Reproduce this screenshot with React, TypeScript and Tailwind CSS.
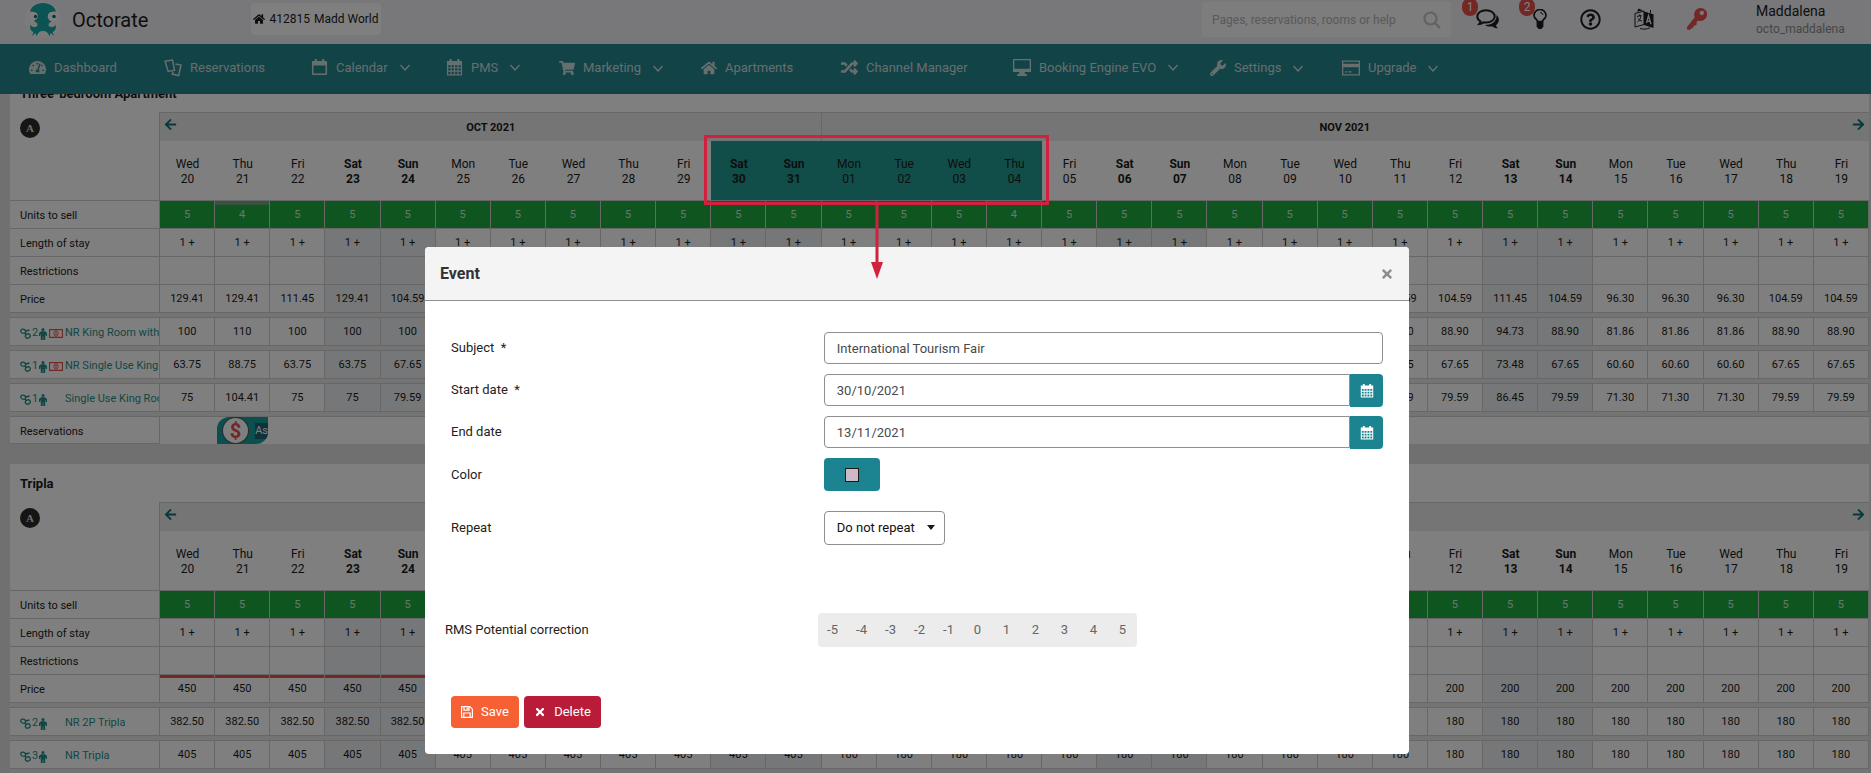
import type { ReactNode } from "react";
import {
  FaArrowLeft,
  FaArrowRight,
  FaHome,
  FaKey,
  FaRandom,
  FaRegQuestionCircle,
  FaShoppingCart,
  FaTachometerAlt,
  FaTimes,
  FaWrench,
} from "react-icons/fa";

type NavItem = {
  label: string;
  icon: ReactNode;
  width: string;
  menu?: boolean;
};

type Rate = {
  name: string;
  guests: number;
  refund?: boolean;
  values: string[];
};

type Room = {
  title: string;
  units: number[];
  prices: string[];
  priceAlert?: number;
  marked?: boolean;
  booking?: string;
  rates: Rate[];
};

const WEEK = ["Sun", "Mon", "Tue", "Wed", "Thu", "Fri", "Sat"];

// 20 Oct 2021 (Wed) -> 19 Nov 2021
const days = Array.from({ length: 31 }, (_, i) => {
  const num = i < 12 ? 20 + i : i - 11;
  const name = WEEK[(3 + i) % 7];
  return {
    name,
    num: String(num).padStart(2, "0"),
    weekend: name === "Sat" || name === "Sun",
  };
});

const fill = (n: number, v: string): string[] => Array(n).fill(v);

const rooms: Room[] = [
  {
    title: "Three-bedroom Apartment",
    units: days.map((_, i) => (i === 1 || i === 15 ? 4 : 5)),
    prices: [
      "129.41", "129.41", "111.45", "129.41", ...fill(20, "104.59"),
      "111.45", "104.59", ...fill(3, "96.30"), ...fill(2, "104.59"),
    ],
    marked: true,
    booking: "As",
    rates: [
      {
        name: "NR King Room with Balcony",
        guests: 2,
        refund: true,
        values: [
          "100", "110", "100", "100", "100", ...fill(19, "88.90"),
          "94.73", "88.90", ...fill(3, "81.86"), ...fill(2, "88.90"),
        ],
      },
      {
        name: "NR Single Use King Room",
        guests: 1,
        refund: true,
        values: [
          "63.75", "88.75", "63.75", "63.75", ...fill(20, "67.65"),
          "73.48", "67.65", ...fill(3, "60.60"), ...fill(2, "67.65"),
        ],
      },
      {
        name: "Single Use King Room",
        guests: 1,
        values: [
          "75", "104.41", "75", "75", ...fill(20, "79.59"),
          "86.45", "79.59", ...fill(3, "71.30"), ...fill(2, "79.59"),
        ],
      },
    ],
  },
  {
    title: "Tripla",
    units: days.map(() => 5),
    prices: [...fill(12, "450"), ...fill(19, "200")],
    priceAlert: 12,
    rates: [
      { name: "NR 2P Tripla", guests: 2, values: [...fill(12, "382.50"), ...fill(19, "180")] },
      { name: "NR Tripla", guests: 3, values: [...fill(12, "405"), ...fill(19, "180")] },
    ],
  },
];

function CardsIcon() {
  return (
    <svg viewBox="0 0 18 18" className="size-[18px]" fill="none" stroke="currentColor" strokeWidth="1.5">
      <path d="M1 2.200 8.500 1l2 10.200-6.300 1.300z" />
      <path d="M11.500 5 17 6 14.600 16.500l-6.200-1.400.5-2.500" />
    </svg>
  );
}

function CalendarIcon() {
  return (
    <svg viewBox="0 0 18 18" className="size-[17px]" fill="currentColor">
      <path d="M4 0h2.200v2h5.600V0H14v2h2a1 1 0 0 1 1 1v13a1 1 0 0 1-1 1H2a1 1 0 0 1-1-1V3a1 1 0 0 1 1-1h2zM2.600 7v8.400h12.800V7z" fillRule="evenodd" />
    </svg>
  );
}

function GridCalendarIcon({ className }: { className: string }) {
  return (
    <svg viewBox="0 0 18 18" className={className} fill="currentColor">
      <path
        fillRule="evenodd"
        d="M3.6 1.2a1.3 1.3 0 0 1 2.6 0V2h5.6v-.8a1.3 1.3 0 0 1 2.6 0V2H17v15.5H1V2h2.6zM2.3 6.5v2.3h2.5V6.5zm3.6 0v2.3h2.5V6.5zm3.7 0v2.3h2.5V6.5zm3.7 0v2.3h2.4V6.5zM2.3 9.9v2.4h2.5V9.9zm3.6 0v2.4h2.5V9.9zm3.7 0v2.4h2.5V9.9zm3.7 0v2.4h2.4V9.9zM2.3 13.5v2.6h2.5v-2.6zm3.6 0v2.6h2.5v-2.6zm3.7 0v2.6h2.5v-2.6zm3.7 0v2.6h2.4v-2.6z"
      />
    </svg>
  );
}

function DesktopIcon() {
  return (
    <svg viewBox="0 0 18 17" className="h-[17px] w-[18px]" fill="currentColor">
      <path d="M0 0h18v13h-6.5l.8 2.3H14V17H4v-1.7h1.7l.8-2.3H0zm1.3 1.3v8.4h15.4V1.3z" fillRule="evenodd" />
    </svg>
  );
}

function CreditCardIcon() {
  return (
    <svg viewBox="0 0 18 16" className="h-4 w-[18px]" fill="currentColor">
      <path d="M0 .5h18v15H0zm1.3 1.3v2h15.4v-2zm0 5.4v7h15.4v-7zM3 11.2h2.2v1.3H3zm3.3 0h3.2v1.3H6.3z" fillRule="evenodd" />
    </svg>
  );
}

function Chevron() {
  return (
    <svg viewBox="0 0 10 7" className="h-[7px] w-[10px]" fill="none" stroke="currentColor" strokeWidth="1.4">
      <path d="m.5 1 4.5 5 4.5-5" />
    </svg>
  );
}

function Octopus() {
  return (
    <svg viewBox="0 0 36 36" className="size-9">
      <circle cx="18" cy="18" r="18" fill="#fff" fillOpacity=".45" />
      {/* head, then the curled legs around the gap in the middle */}
      <path
        d="M18 1c7 0 12 3.500 13 9-2-1-5 0-6 2.500s0 5.500 2 6.500c-2 1.500-3.500 2-3.500 4 0 1.500 1.500 2 3.500 2 2.500 0 3-1 3.500-2.500 1 3.500 0 6.500-3 7.500l1.500 4-3.500-3-1 3.500c-1-3.500-3-5.500-6.500-5.500S12.500 31 11.500 34.500l-1-3.500L7 34l1.500-4c-3-1-4-4-3-7.500C6 24 6.500 25 9 25c2 0 3.500-.5 3.500-2 0-2-1.500-2.500-3.500-4 2-1 3-4 2-6.500S7 9 5 10C6 4.500 11 1 18 1z"
        fill="#17a8a6"
      />
      <circle cx="9" cy="14" r="3.800" fill="#fff" />
      <circle cx="27.500" cy="14.500" r="4.800" fill="#fff" />
      <circle cx="10.500" cy="14.500" r="1.700" fill="#17686b" />
      <circle cx="29" cy="14.500" r="1.800" fill="#17686b" />
    </svg>
  );
}

function ChatIcon() {
  return (
    <svg viewBox="0 0 24 20" className="h-5 w-6">
      <path d="M20.500 6c3 2.800 3.500 7-.5 10.200.3 1.300 1 2.200 2.200 3-2.600.2-4.300-.5-5.600-1.800-3 .5-5.700 0-7.600-1.400 6 0 12-3 11.500-10z" fill="currentColor" />
      <path
        d="M10 1.200c5 0 8.700 2.700 8.700 6.200s-3.700 6.200-8.700 6.200c-.8 0-1.700-.1-2.500-.3-1 .9-2.400 1.600-4.200 1.700.7-.8 1.100-1.600 1.200-2.700C2.500 11.100 1.300 9.400 1.300 7.400c0-3.500 3.700-6.200 8.700-6.200z"
        fill="none"
        stroke="currentColor"
        strokeWidth="2"
      />
    </svg>
  );
}

function BulbIcon() {
  return (
    <svg viewBox="0 0 14 20" className="h-5 w-[14px]" fill="none" stroke="currentColor" strokeWidth="1.700">
      <path d="M4.500 12.500c0-2-3.500-3-3.500-6A6 6 0 0 1 13 6.500c0 3-3.500 4-3.500 6z" />
      <path d="M7 3.600c1.700 0 2.800 1 2.900 2.400" strokeWidth="1" />
      <path d="M3.600 12.500h6.800v5L8.500 20h-3l-1.900-2.500z" fill="currentColor" stroke="none" />
    </svg>
  );
}

function TranslateIcon() {
  return (
    <svg viewBox="0 0 20 22" className="h-[22px] w-5">
      <path d="M1 5.500 10 3v13.500L1 19zM6 20.500c3 1 7 .8 10-.8" fill="none" stroke="currentColor" />
      <path d="M3 3.500 4.500.500 9 2.500zM10 3.500l9.500 2.700V20L10 17zM16 2h1v3l-1-.3z" fill="currentColor" />
      <path d="M3 8.500 7.500 7.300M5.300 6.500v1.300M3.500 14c2-1.500 3-3.500 3.300-6M4 10.500c1 1.500 2.300 2.300 4 2.500" fill="none" stroke="currentColor" />
      <path d="m12.500 15 2-7.300 2.500 8.600m-3.900-3.500 3 .9" fill="none" stroke="#f0f1f3" strokeWidth="1.300" />
    </svg>
  );
}

function KeyIcon() {
  return (
    <svg viewBox="0 0 20 22" className="h-[22px] w-5" fill="currentColor">
      <path
        fillRule="evenodd"
        d="M13.500 0a6.500 6.500 0 1 1-2.600 12.400l-1.500 2 .6 1.600-1.500 1.500-1.200-.2-.8 1.700-1.500 1.300L2.500 22 0 21.500 0 19 7.800 9.300A6.500 6.500 0 0 1 13.500 0zm1.300 2.800a2.200 2.200 0 1 0 .1 4.400 2.200 2.200 0 0 0-.1-4.400z"
      />
    </svg>
  );
}

function ChainIcon() {
  return (
    <svg viewBox="0 0 11 11" className="size-[11px]" fill="none" stroke="currentColor" strokeWidth="1.300">
      <ellipse cx="3.200" cy="3.200" rx="2.500" ry="2" transform="rotate(25 3.200 3.200)" />
      <ellipse cx="7.800" cy="8" rx="2.500" ry="2.100" transform="rotate(-25 7.800 8)" />
      <path d="M5.300 4.300 5.800 6.500M9.500 2 5.500 3" />
    </svg>
  );
}

function PersonIcon() {
  return (
    <svg viewBox="0 0 8 12" className="h-3 w-2" fill="currentColor">
      <circle cx="4" cy="1.500" r="1.500" />
      <path d="M2 3.300h4L8 5v3H6.700V6.200h-.5V12H4.300V8.500h-.6V12H1.800V6.200h-.5V8H0V5z" />
    </svg>
  );
}

function MoneyIcon() {
  return (
    <svg viewBox="0 0 14 9" className="h-[9px] w-[14px]" fill="none" stroke="currentColor">
      <path d="M.5.500h13v8H.5z" strokeWidth="1.300" />
      <ellipse cx="7" cy="4.500" rx="2.200" ry="2.700" />
      <path d="M7 3v3" />
    </svg>
  );
}

function SaveIcon() {
  return (
    <svg viewBox="0 0 12 12" className="size-3" fill="none" stroke="currentColor" strokeWidth="1.200">
      <path d="M.6.600h8.200l2.600 2.600v8.200H.6zM3 .6v3.600h5V.6M2.800 11.400V7h6.400v4.400M6.300 1.500v1.800" />
    </svg>
  );
}

const nav: NavItem[] = [
  { label: "Dashboard", icon: <FaTachometerAlt className="size-[17px]" />, width: "w-[135px]" },
  { label: "Reservations", icon: <CardsIcon />, width: "w-[147px]" },
  { label: "Calendar", icon: <CalendarIcon />, width: "w-[135px]", menu: true },
  { label: "PMS", icon: <GridCalendarIcon className="size-[17px]" />, width: "w-[113px]", menu: true },
  { label: "Marketing", icon: <FaShoppingCart className="size-4" />, width: "w-[142px]", menu: true },
  { label: "Apartments", icon: <FaHome className="size-4" />, width: "w-[140px]" },
  { label: "Channel Manager", icon: <FaRandom className="size-[17px]" />, width: "w-[172px]" },
  { label: "Booking Engine EVO", icon: <DesktopIcon />, width: "w-[197px]", menu: true },
  { label: "Settings", icon: <FaWrench className="size-4" />, width: "w-[132px]", menu: true },
  { label: "Upgrade", icon: <CreditCardIcon />, width: "w-[132px]", menu: true },
];

function Badge({ children }: { children: ReactNode }) {
  return (
    <span className="absolute -top-[11px] -left-[14px] flex h-[18px] w-4 items-center justify-center rounded-full bg-[#e8504c] text-xs text-white">
      {children}
    </span>
  );
}

function TopBar() {
  return (
    <div className="flex h-11 items-start bg-[#f0f1f4] text-[#1c1c1c]">
      <div className="flex w-[251px] items-center gap-[11px] pt-[2px] pl-[25px]">
        <Octopus />
        <span className="text-xl leading-9">Octorate</span>
      </div>
      <button className="mt-[3px] flex h-8 w-[130px] items-center justify-center gap-1 rounded bg-white text-xs whitespace-nowrap">
        <FaHome className="size-3" />
        <span>412815</span>
        <span>Madd World</span>
      </button>
      <div className="mt-[2px] ml-auto flex h-[35px] w-[249px] items-center bg-[#fafafb] px-[10px]">
        <input
          aria-label="Search"
          placeholder="Pages, reservations, rooms or help"
          className="min-w-0 flex-1 bg-transparent text-xs placeholder:text-[#b4b4b4]"
        />
        <svg viewBox="0 0 18 18" className="size-[18px] text-[#c4c4c4]" fill="none" stroke="currentColor" strokeWidth="2.200">
          <circle cx="7.500" cy="7.500" r="6" />
          <path d="m12 12 5 5" />
        </svg>
      </div>
      <div className="flex w-[305px] items-center gap-[33px] pt-2 pl-[25px]">
        <button aria-label="Messages" className="relative"><ChatIcon /><Badge>1</Badge></button>
        <button aria-label="News" className="relative"><BulbIcon /><Badge>2</Badge></button>
        <button aria-label="Help"><FaRegQuestionCircle className="size-[21px]" /></button>
        <button aria-label="Language"><TranslateIcon /></button>
        <button aria-label="Access" className="text-[#e8504c]"><KeyIcon /></button>
      </div>
      <div className="w-[115px] pt-[2px]">
        <p className="text-sm leading-[18px]">Maddalena</p>
        <p className="text-xs leading-[18px] text-[#8a8a8a]">octo_maddalena</p>
      </div>
    </div>
  );
}

function NavBar() {
  return (
    <nav className="flex h-[50px] items-center bg-[#24868f] pt-[2px] pl-[29px] text-[13px] text-[#cfdcdc]">
      {nav.map((item) => (
        <div key={item.label} className={`${item.width} shrink-0`}>
          <a href="#" className="inline-flex items-center gap-2 whitespace-nowrap">
            {item.icon}
            <span>{item.label}</span>
            {item.menu && <span className="ml-1"><Chevron /></span>}
          </a>
        </div>
      ))}
    </nav>
  );
}

const line = "border-b border-[#cfcfcf]";
const cell = "h-7 border-r border-b border-[#cfcfcf] p-0 pt-[2px]";
const labelCell = "border-r border-b border-[#cfcfcf] bg-white p-0 pt-1 pl-[10px] text-left font-normal";

function dayBg(i: number) {
  return days[i].weekend ? "bg-[#eceef0]" : "bg-white";
}

function Spacer() {
  return (
    <tr>
      <td colSpan={32} className={`${line} h-[5px] bg-[#e8e9e9] p-0`} />
    </tr>
  );
}

function RoomCard({ room }: { room: Room }) {
  return (
    <section className="mb-5 bg-white">
      <h2 className="h-[38px] pt-[10px] pl-[10px] text-[13px] leading-[20px] font-bold">{room.title}</h2>
      <table className="w-full table-fixed border-separate border-spacing-0 text-center text-[11px]">
        <colgroup>
          <col className="w-[150px]" />
          {days.map((d) => <col key={d.num} />)}
        </colgroup>
        <thead>
          <tr>
            <td rowSpan={2} className="border-r border-b border-[#cfcfcf] p-0 pt-[6px] pl-[10px] text-left align-top">
              <span className="inline-flex size-5 items-center justify-center rounded-full bg-[#2a2a2a] font-['Liberation_Serif',serif] font-bold text-[#ddd]">
                A
              </span>
            </td>
            <th colSpan={12} className="h-[29px] border-t border-r border-[#cfcfcf] bg-[#ebebeb] p-0">
              <div className="flex items-start px-1">
                <button aria-label="Previous days" className="text-[#0b7377]"><FaArrowLeft className="size-[13px]" /></button>
                <span className="flex-1 pt-[2px] pr-3">OCT 2021</span>
              </div>
            </th>
            <th colSpan={19} className="border-t border-[#cfcfcf] bg-[#ebebeb] p-0">
              <div className="flex items-start px-1">
                <span className="flex-1 pt-[2px] pl-3">NOV 2021</span>
                <button aria-label="Next days" className="text-[#0b7377]"><FaArrowRight className="size-[13px]" /></button>
              </div>
            </th>
          </tr>
          <tr>
            {days.map((d, i) => (
              <th
                key={i}
                className={`h-[60px] border-b border-[#cfcfcf] p-0 pt-[2px] text-xs leading-[15px] ${d.weekend ? "font-bold" : "font-normal"} ${
                  room.marked && i >= 10 && i <= 15 ? "bg-[#229c95]" : ""
                }`}
              >
                {d.name}
                <br />
                {d.num}
              </th>
            ))}
          </tr>
        </thead>
        <tbody>
          <tr>
            <th scope="row" className={labelCell}>Units to sell</th>
            {room.units.map((u, i) => (
              <td
                key={i}
                className={`${cell} bg-[#1caa40] text-white/80 ${u === 4 ? "shadow-[inset_0_4px_#6fa57c]" : ""}`}
              >
                {u}
              </td>
            ))}
          </tr>
          <tr>
            <th scope="row" className={labelCell}>Length of stay</th>
            {days.map((_, i) => <td key={i} className={`${cell} ${dayBg(i)}`}>1 +</td>)}
          </tr>
          <tr>
            <th scope="row" className={labelCell}>Restrictions</th>
            {days.map((_, i) => <td key={i} className={`${cell} ${dayBg(i)}`} />)}
          </tr>
          <tr>
            <th scope="row" className={labelCell}>Price</th>
            {room.prices.map((p, i) => (
              <td
                key={i}
                className={`${cell} ${dayBg(i)} ${i < (room.priceAlert ?? 0) ? "shadow-[inset_0_3px_#e8504c]" : ""}`}
              >
                {p}
              </td>
            ))}
          </tr>
          <Spacer />
          {room.rates.map((rate) => (
            <RateRows key={rate.name} rate={rate} />
          ))}
          <tr>
            <th scope="row" className={labelCell}>Reservations</th>
            <td colSpan={31} className="h-[27px] p-0">
              {room.booking && (
                <div className="ml-[57px] flex h-[27px] w-[51px] items-center justify-between overflow-hidden rounded-tl-xl rounded-br-xl bg-[#17a09f] pl-[6px] text-white">
                  <span className="flex size-[25px] items-center justify-center rounded-full bg-white text-xl font-bold text-[#e8504c] ring-1 ring-[#555]">
                    $
                  </span>
                  <span className="bg-[#226272] leading-4">{room.booking}</span>
                </div>
              )}
            </td>
          </tr>
        </tbody>
      </table>
    </section>
  );
}

function RateRows({ rate }: { rate: Rate }) {
  return (
    <>
      <tr>
        <th scope="row" className={`${labelCell} text-[#1f8f86]`}>
          <div className="flex items-center">
            <span className="flex w-[45px] shrink-0 items-center">
              <ChainIcon />
              <span className="mx-[1px]">{rate.guests}</span>
              <PersonIcon />
              {rate.refund && <span className="ml-[2px] text-[#e8504c]"><MoneyIcon /></span>}
            </span>
            <span className="min-w-0 overflow-hidden whitespace-nowrap">{rate.name}</span>
          </div>
        </th>
        {rate.values.map((v, i) => <td key={i} className={`${cell} ${dayBg(i)}`}>{v}</td>)}
      </tr>
      <Spacer />
    </>
  );
}

// Red frame and arrow pointing from the marked days to the dialog
function Callout() {
  return (
    <div className="pointer-events-none absolute top-[135px] left-[704px] z-30 flex w-[345px] flex-col items-center">
      <div className="h-[70px] w-full border-3 border-[#d2203f]" />
      <svg viewBox="0 0 12 74" className="h-[74px] w-3 text-[#d2203f]">
        <path d="M6 0v60" stroke="currentColor" strokeWidth="3" />
        <path d="M0 57h12L6 74z" fill="currentColor" />
      </svg>
    </div>
  );
}

function DateField({ id, label, value }: { id: string; label: string; value: string }) {
  return (
    <div className="flex h-[42px] items-start">
      <label htmlFor={id} className="w-2/5 leading-8 whitespace-pre">{label}</label>
      <div className="flex flex-1">
        <input
          id={id}
          defaultValue={value}
          className="h-8 min-w-0 flex-1 rounded-l border border-[#8f8f8f] px-3 text-[#4a4a4a]"
        />
        <button type="button" aria-label={`Pick ${id}`} className="flex h-[33px] w-[33px] items-center justify-center rounded-r bg-[#1c8490] text-white">
          <GridCalendarIcon className="size-[14px]" />
        </button>
      </div>
    </div>
  );
}

function EventDialog() {
  const steps = [-5, -4, -3, -2, -1, 0, 1, 2, 3, 4, 5];
  return (
    <div className="absolute inset-0 z-20 flex items-start justify-center bg-black/50 pt-[247px] pr-[37px]">
      <div role="dialog" aria-label="Event" className="w-[984px] overflow-hidden rounded bg-white text-[13px] text-[#222]">
        <div className="flex h-[54px] items-center justify-between border-b border-[#8f8f8f] bg-[#f4f4f4] px-[15px]">
          <h1 className="text-base font-bold text-[#333]">Event</h1>
          <button aria-label="Close" className="text-[#8d8d8d]"><FaTimes className="size-[14px]" /></button>
        </div>
        <form className="px-[26px] pt-[31px] pb-[26px]">
          <div className="flex h-[42px] items-start">
            <label htmlFor="subject" className="w-2/5 leading-8 whitespace-pre">Subject  *</label>
            <input
              id="subject"
              defaultValue="International Tourism Fair"
              className="h-8 min-w-0 flex-1 rounded border border-[#8f8f8f] px-3 text-[#4a4a4a]"
            />
          </div>
          <DateField id="start" label="Start date  *" value="30/10/2021" />
          <DateField id="end" label="End date" value="13/11/2021" />
          <div className="flex h-[53px] items-start">
            <label htmlFor="color" className="w-2/5 leading-[33px]">Color</label>
            <button id="color" type="button" className="flex h-[33px] w-14 items-center justify-center rounded bg-[#1c8490]">
              <span className="size-[14px] border border-[#1a1a1a] bg-[#cdbac6]" />
            </button>
          </div>
          <div className="flex items-start">
            <label htmlFor="repeat" className="w-2/5 leading-[34px]">Repeat</label>
            <div className="relative">
              <select id="repeat" className="h-[34px] w-[121px] appearance-none rounded border border-[#8f8f8f] bg-white px-3 text-[#111]">
                <option>Do not repeat</option>
              </select>
              <svg viewBox="0 0 8 5" className="pointer-events-none absolute top-[14px] right-[10px] h-[5px] w-2">
                <path d="M0 0h8L4 5z" fill="#1a1a1a" />
              </svg>
            </div>
          </div>
          <div className="-mx-[6px] mt-[68px] flex items-center">
            <span className="w-[373px]">RMS Potential correction</span>
            <div className="flex h-[34px] rounded-sm bg-[#ececec] text-[#666]">
              {steps.map((s) => (
                <button key={s} type="button" className="w-[29px]">{s}</button>
              ))}
            </div>
          </div>
          <div className="mt-[49px] flex gap-[5px] text-white">
            <button type="button" className="flex h-8 w-[68px] items-center justify-center gap-2 rounded bg-[#f75f35]">
              <SaveIcon />
              Save
            </button>
            <button type="button" className="flex h-8 w-[77px] items-center justify-center gap-2 rounded bg-[#b91c38]">
              <FaTimes className="size-3" />
              Delete
            </button>
          </div>
        </form>
      </div>
    </div>
  );
}

export default function App() {
  return (
    <div className="relative h-screen overflow-hidden bg-[#dee0df] font-['Roboto',sans-serif] text-[#1a1a1a]">
      <header className="relative z-10">
        <TopBar />
        <NavBar />
      </header>
      {/* list is scrolled a little under the header */}
      <main className="-mt-5 mr-[2px] ml-[10px]">
        {rooms.map((room) => <RoomCard key={room.title} room={room} />)}
      </main>
      <EventDialog />
      <Callout />
    </div>
  );
}
